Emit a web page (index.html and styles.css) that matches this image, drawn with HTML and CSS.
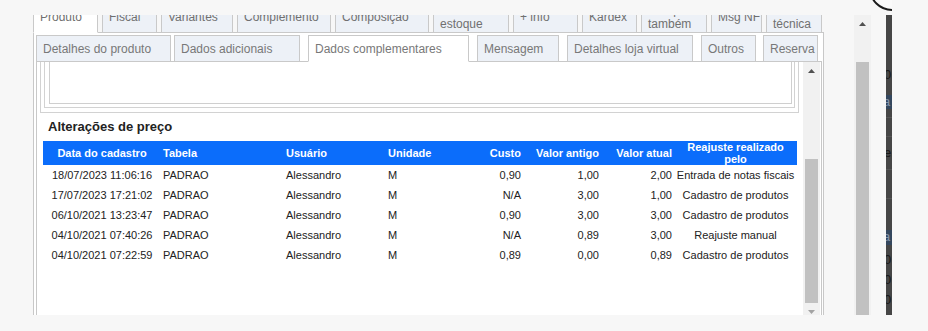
FILE: index.html
```html
<!DOCTYPE html>
<html lang="pt-BR">
<head>
<meta charset="utf-8">
<title>Produto - Dados complementares</title>
<link rel="stylesheet" href="styles.css">
</head>
<body>
<div class="app">
  <div class="close-btn"></div>
  <div class="frame">
    <div class="viewport">
      <div class="page">
        <div class="tabs1">
          <div class="tab1 active w-produto"><span>Produto</span></div>
          <div class="tab1 w-fiscal"><span>Fiscal</span></div>
          <div class="tab1 w-variantes"><span>Variantes</span></div>
          <div class="tab1 w-complemento"><span>Complemento</span></div>
          <div class="tab1 w-composicao"><span>Composição</span></div>
          <div class="tab1 w-estoque"><span>Saldo em<br>estoque</span></div>
          <div class="tab1 w-info"><span>+ info</span></div>
          <div class="tab1 w-kardex"><span>Kardex</span></div>
          <div class="tab1 w-tambem"><span>Compre<br>também</span></div>
          <div class="tab1 w-msgnf"><span>Msg NF</span></div>
          <div class="tab1 w-tecnica last"><span>Ficha<br>técnica</span></div>
        </div>
        <div class="panel1">
          <div class="tabs2">
            <div class="tab2 w-detalhes">Detalhes do produto</div>
            <div class="tab2 w-adicionais">Dados adicionais</div>
            <div class="tab2 active w-complementares">Dados complementares</div>
            <div class="tab2 w-mensagem">Mensagem</div>
            <div class="tab2 w-loja">Detalhes loja virtual</div>
            <div class="tab2 w-outros">Outros</div>
            <div class="tab2 w-reserva last">Reserva</div>
          </div>
          <div class="panel2">
            <div class="pane">
              <div class="pane-content">
                <div class="box-a"><div class="box-b"><div class="box-c"></div></div></div>
                <div class="section-title">Alterações de preço</div>
                <table class="grid">
                  <colgroup>
                    <col class="c-data"><col class="c-tabela"><col class="c-usuario"><col class="c-unidade">
                    <col class="c-custo"><col class="c-antigo"><col class="c-atual"><col class="c-reajuste">
                  </colgroup>
                  <thead>
                    <tr>
                      <th class="al-c">Data do cadastro</th>
                      <th class="al-l">Tabela</th>
                      <th class="al-l">Usuário</th>
                      <th class="al-l">Unidade</th>
                      <th class="al-r">Custo</th>
                      <th class="al-r">Valor antigo</th>
                      <th class="al-r">Valor atual</th>
                      <th class="al-c">Reajuste realizado pelo</th>
                    </tr>
                  </thead>
                  <tbody>
                    <tr><td class="al-c">18/07/2023 11:06:16</td><td>PADRAO</td><td>Alessandro</td><td>M</td><td class="al-r">0,90</td><td class="al-r">1,00</td><td class="al-r">2,00</td><td class="al-c">Entrada de notas fiscais</td></tr>
                    <tr><td class="al-c">17/07/2023 17:21:02</td><td>PADRAO</td><td>Alessandro</td><td>M</td><td class="al-r">N/A</td><td class="al-r">3,00</td><td class="al-r">1,00</td><td class="al-c">Cadastro de produtos</td></tr>
                    <tr><td class="al-c">06/10/2021 13:23:47</td><td>PADRAO</td><td>Alessandro</td><td>M</td><td class="al-r">0,90</td><td class="al-r">3,00</td><td class="al-r">3,00</td><td class="al-c">Cadastro de produtos</td></tr>
                    <tr><td class="al-c">04/10/2021 07:40:26</td><td>PADRAO</td><td>Alessandro</td><td>M</td><td class="al-r">N/A</td><td class="al-r">0,89</td><td class="al-r">3,00</td><td class="al-c">Reajuste manual</td></tr>
                    <tr><td class="al-c">04/10/2021 07:22:59</td><td>PADRAO</td><td>Alessandro</td><td>M</td><td class="al-r">0,89</td><td class="al-r">0,00</td><td class="al-r">0,89</td><td class="al-c">Cadastro de produtos</td></tr>
                  </tbody>
                </table>
              </div>
            </div>
            <div class="sbar inner">
              <div class="sb-btn"><svg width="7" height="4" viewBox="0 0 7 4"><path d="M0 4 L3.5 0 L7 4 Z" fill="#505050"/></svg></div>
              <div class="sb-track end"><div class="sb-thumb thumb-inner"></div></div>
              <div class="sb-btn"><svg width="7" height="4" viewBox="0 0 7 4"><path d="M0 0 L3.5 4 L7 0 Z" fill="#a3a3a3"/></svg></div>
            </div>
          </div>
        </div>
      </div>
    </div>
    <div class="sbar outer">
      <div class="sb-btn"><svg width="7" height="4" viewBox="0 0 7 4"><path d="M0 4 L3.5 0 L7 4 Z" fill="#505050"/></svg></div>
      <div class="sb-track"><div class="sb-thumb thumb-outer"></div></div>
    </div>
    <div class="strip">
      <div class="sp-glyph m53">0</div>
      <div class="sp-band m13">a</div>
      <div class="sp-line m8"></div>
      <div class="sp-line m18"></div>
      <div class="sp-glyph m9">e:</div>
      <div class="sp-line m9"></div>
      <div class="sp-line m28"></div>
      <div class="sp-band tall m31">a</div>
      <div class="sp-glyph m8">0</div>
      <div class="sp-glyph m6">0</div>
      <div class="sp-glyph m6">0</div>
    </div>
  </div>
</div>
</body>
</html>
```

FILE: styles.css
```css
* { box-sizing: border-box; }
html, body { margin: 0; padding: 0; }
body {
  background: #f7f7f7;
  font-family: "Liberation Sans", Arial, sans-serif;
  width: 928px;
  height: 331px;
  overflow: hidden;
}
.app {
  position: relative;
  width: 892px;
  height: 331px;
  overflow: hidden;
}
.close-btn {
  position: absolute;
  left: 869px;
  top: -35px;
  width: 46px;
  height: 46px;
  border: 2px solid #1b1b1b;
  border-radius: 50%;
  background: #fafafa;
  z-index: 5;
}
.frame {
  display: flex;
  margin-top: 15px;
  height: 300px;
}
.viewport {
  flex: none;
  width: 854px;
  height: 300px;
  overflow: hidden;
}
.page {
  margin-top: -15px;
  padding-left: 33px;
}

/* first tab row */
.tabs1 {
  display: flex;
  height: 33px;
  width: 791px;
}
.tab1 {
  flex: none;
  position: relative;
  height: 33px;
  margin-right: 4px;
  padding: 0 2px 0 6px;
  border: 1px solid #c9c9c9;
  background: #edf1f7;
  color: #707070;
  font-size: 12px;
  line-height: 14px;
  white-space: nowrap;
  display: flex;
  align-items: center;
}
.tab1.active { background: #fff; border-bottom-color: #fff; z-index: 1; }
.tab1.last { margin-right: 0; }
.w-produto { width: 65px; }
.w-fiscal { width: 55px; }
.w-variantes { width: 72px; }
.w-complemento { width: 94px; }
.w-composicao { width: 94px; }
.w-estoque { width: 76px; }
.w-info { width: 65px; }
.w-kardex { width: 55px; }
.w-tambem { width: 66px; }
.w-msgnf { width: 51px; }
.w-tecnica { width: 56px; }

.panel1 {
  margin-top: -1px;
  width: 791px;
  height: 320px;
  border: 1px solid #c8c8c8;
  background: #fff;
  padding: 2px 1px 0 2px;
}

/* second tab row */
.tabs2 {
  display: flex;
  height: 27px;
}
.tab2 {
  flex: none;
  position: relative;
  height: 27px;
  margin-right: 8px;
  padding: 0 2px 0 6px;
  border: 1px solid #c9c9c9;
  background: #edf1f7;
  color: #787878;
  font-size: 12px;
  line-height: 14px;
  white-space: nowrap;
  display: flex;
  align-items: center;
}
.tab2.active { background: #fff; border-bottom-color: #fff; z-index: 1; }
.tab2.last { margin-right: 0; }
.w-detalhes { width: 135px; margin-right: 3px; }
.w-adicionais { width: 126px; }
.w-complementares { width: 161px; }
.w-mensagem { width: 82px; }
.w-loja { width: 126px; }
.w-outros { width: 55px; margin-right: 7px; }
.w-reserva { width: 55px; }

.panel2 {
  margin-top: -1px;
  height: 260px;
  border: 1px solid #c8c8c8;
  background: #fff;
  display: flex;
}
.pane {
  flex: 1;
  height: 258px;
  overflow: hidden;
}
.pane-content { margin-top: -30px; }

.box-a {
  margin: 0 4px 0 3px;
  border: 1px solid #d2d2d2;
  padding: 3px 3px 4px 3px;
}
.box-b {
  border: 1px solid #d2d2d2;
  padding: 3px 2px 3px 4px;
}
.box-c {
  border: 1px solid #cfcfcf;
  height: 64px;
  background: #fff;
}

.section-title {
  margin: 6px 0 6px 11px;
  font-size: 13px;
  line-height: 16px;
  font-weight: bold;
  color: #222;
}

.grid {
  margin-left: 6px;
  width: 754px;
  table-layout: fixed;
  border-collapse: collapse;
  border-spacing: 0;
  font-size: 11px;
  color: #222;
}
.c-data { width: 118px; }
.c-tabela { width: 123px; }
.c-usuario { width: 102px; }
.c-unidade { width: 77px; }
.c-custo { width: 60px; }
.c-antigo { width: 78px; }
.c-atual { width: 73px; }
.c-reajuste { width: 123px; }
.grid th {
  height: 24px;
  padding: 0 2px;
  background: #0b6dfb;
  color: #fff;
  font-weight: bold;
  line-height: 12px;
  vertical-align: middle;
}
.grid td {
  height: 20px;
  padding: 0 2px;
  line-height: 13px;
  white-space: nowrap;
  vertical-align: middle;
  text-align: left;
}
.grid .al-c { text-align: center; }
.grid .al-l { text-align: left; }
.grid .al-r { text-align: right; }

/* scrollbars */
.sbar {
  flex: none;
  width: 17px;
  background: #f1f1f1;
  display: flex;
  flex-direction: column;
}
.sbar.inner { height: 258px; margin-right: 1px; }
.sbar.outer { height: 300px; }
.sb-btn {
  flex: none;
  height: 17px;
  display: flex;
  align-items: center;
  justify-content: center;
}
.sb-btn svg { display: block; }
.sb-track {
  flex: 1;
  display: flex;
  flex-direction: column;
}
.sb-track.end { justify-content: flex-end; }
.sb-thumb { margin: 0 2px; background: #c1c1c1; }
.thumb-inner { height: 144px; }
.thumb-outer { flex: 1; margin-top: 30px; }

/* dimmed backdrop strip */
.strip {
  flex: none;
  width: 6px;
  height: 300px;
  margin-left: 15px;
  background: #464646;
  overflow: hidden;
  display: flex;
  flex-direction: column;
  font-size: 13px;
  line-height: 14px;
}
.sp-glyph {
  flex: none;
  height: 14px;
  color: #181818;
  text-indent: -2px;
  white-space: nowrap;
}
.sp-band {
  flex: none;
  height: 14px;
  background: #34475e;
  color: #8595aa;
  text-indent: -3px;
  white-space: nowrap;
}
.sp-band.tall { height: 15px; }
.sp-line { flex: none; height: 1px; background: #565656; }
.m6 { margin-top: 6px; }
.m8 { margin-top: 8px; }
.m9 { margin-top: 9px; }
.m13 { margin-top: 13px; }
.m18 { margin-top: 18px; }
.m28 { margin-top: 28px; }
.m31 { margin-top: 31px; }
.m53 { margin-top: 53px; }
```
